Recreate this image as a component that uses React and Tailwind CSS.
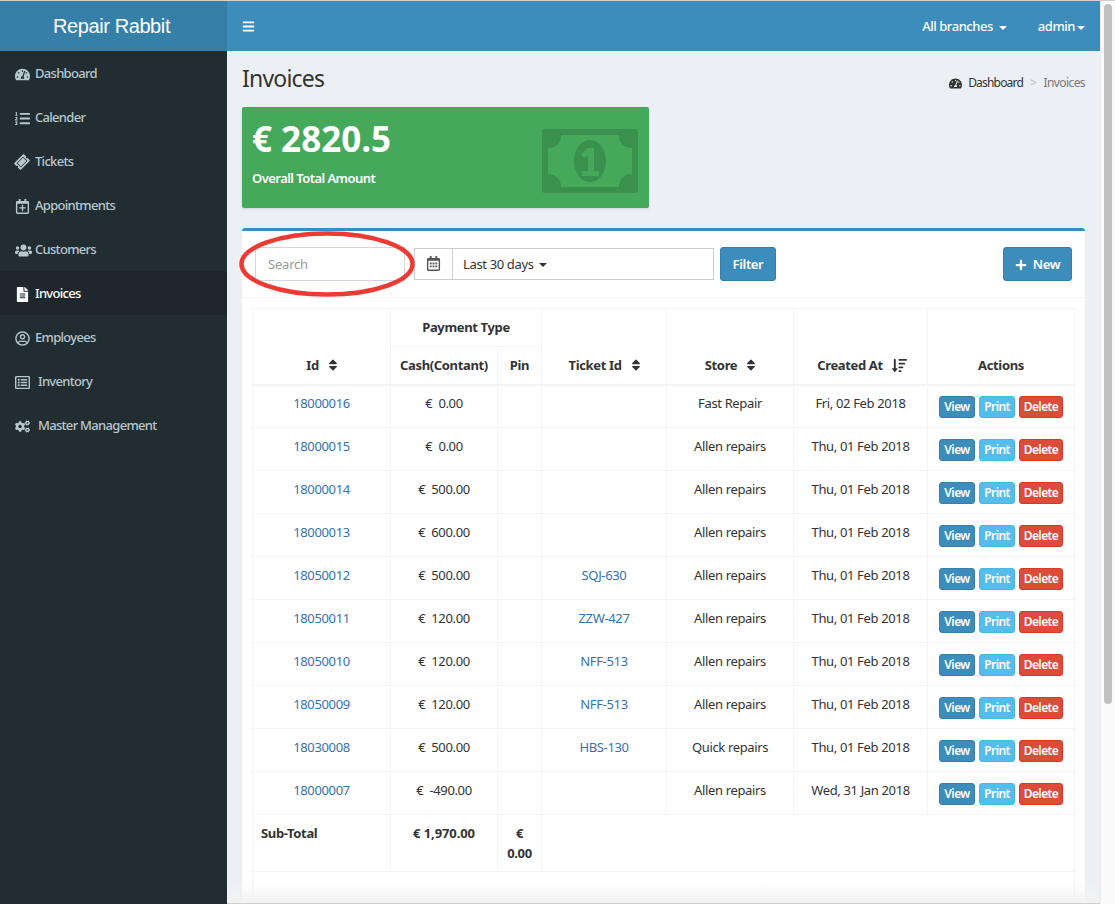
import {
  FaTachometerAlt,
  FaListOl,
  FaTicketAlt,
  FaRegCalendarPlus,
  FaUsers,
  FaFileAlt,
  FaRegUserCircle,
  FaRegListAlt,
  FaCogs,
  FaBars,
  FaRegCalendarAlt,
  FaSort,
  FaSortAmountDown,
  FaPlus,
} from "react-icons/fa"

const navItems = [
  { label: "Dashboard", icon: FaTachometerAlt, size: "text-[15px]" },
  { label: "Calender", icon: FaListOl, size: "text-[15px]" },
  { label: "Tickets", icon: FaTicketAlt, size: "text-[14px] -rotate-45" },
  { label: "Appointments", icon: FaRegCalendarPlus, size: "text-[15px]" },
  { label: "Customers", icon: FaUsers, size: "text-[17px]" },
  { label: "Invoices", icon: FaFileAlt, size: "text-[15px]", active: true },
  { label: "Employees", icon: FaRegUserCircle, size: "text-[15px]" },
  { label: "Inventory", icon: FaRegListAlt, size: "text-[15px]", wide: true },
  { label: "Master Management", icon: FaCogs, size: "text-[15px]", wide: true },
]

const invoices = [
  ["18000016", "0.00", "", "Fast Repair", "Fri, 02 Feb 2018"],
  ["18000015", "0.00", "", "Allen repairs", "Thu, 01 Feb 2018"],
  ["18000014", "500.00", "", "Allen repairs", "Thu, 01 Feb 2018"],
  ["18000013", "600.00", "", "Allen repairs", "Thu, 01 Feb 2018"],
  ["18050012", "500.00", "SQJ-630", "Allen repairs", "Thu, 01 Feb 2018"],
  ["18050011", "120.00", "ZZW-427", "Allen repairs", "Thu, 01 Feb 2018"],
  ["18050010", "120.00", "NFF-513", "Allen repairs", "Thu, 01 Feb 2018"],
  ["18050009", "120.00", "NFF-513", "Allen repairs", "Thu, 01 Feb 2018"],
  ["18030008", "500.00", "HBS-130", "Quick repairs", "Thu, 01 Feb 2018"],
  ["18000007", "-490.00", "", "Allen repairs", "Wed, 31 Jan 2018"],
]

const Caret = ({ className = "ml-[5px]" }) => (
  <span className={`inline-block align-middle border-x-[4px] border-x-transparent border-t-[4px] border-t-current ${className}`} />
)

const MoneyIcon = () => (
  <svg className="absolute left-[300px] top-[22px] w-[96px] h-[64px] text-[#3a914e]" viewBox="0 0 96 64" fill="currentColor">
    <path
      fillRule="evenodd"
      d="M3 0h90a3 3 0 0 1 3 3v58a3 3 0 0 1-3 3H3a3 3 0 0 1-3-3V3a3 3 0 0 1 3-3zM19 6c0 8-5 13-13 13v26c8 0 13 5 13 13h58c0-8 5-13 13-13V19c-8 0-13-5-13-13zM48 11c9 0 16 9.500 16 21s-7 21-16 21-16-9.500-16-21 7-21 16-21z"
    />
    <path d="M46 19h6v23h5v5H40v-5h6V26l-4 3-3-4z" fill="#45a85a" />
  </svg>
)

const SortHead = ({ children, rowSpan, icon, className = "pl-[11px] pr-2" }) => (
  <th rowSpan={rowSpan} className={`border border-[#f4f4f4] border-b-2 align-bottom pb-[8px] text-center font-bold ${className}`}>
    {children}
    {icon || <FaSort className="inline-block ml-[7px] text-[14px] -mt-[2px]" />}
  </th>
)

const ActionButton = ({ className, children }) => (
  <button className={`h-[22px] rounded-[3px] border text-[12px] font-semibold text-white tracking-[-0.6px] ${className}`}>{children}</button>
)

const App = () => {
  return (
    <div className="relative w-[1115px] h-[904px] overflow-hidden flex flex-col font-['Noto_Sans',sans-serif] text-[13px] tracking-[-0.35px] text-[#333] bg-white">
      <div className="h-px bg-[#d0d0d0] shrink-0" />
      <div className="flex flex-1 min-h-0">
        <div className="w-[1100px] flex flex-col">
          {/* Top bar */}
          <div className="flex h-[50px] shrink-0 bg-[#3c8dbc] text-white">
            <div className="w-[227px] bg-[#367fa9] flex items-center justify-center pr-[4px] font-['Liberation_Sans',sans-serif] text-[20px] tracking-[-0.4px]">
              Repair Rabbit
            </div>
            <div className="flex-1 flex items-center pl-[15px] pr-[15px]">
              <FaBars className="text-[13px]" />
              <div className="ml-auto flex items-center gap-[31px] pt-[2px] font-medium tracking-[-0.45px]">
                <span>
                  All branches <Caret className="ml-[3px]" />
                </span>
                <span>
                  admin
                  <Caret className="ml-[2px]" />
                </span>
              </div>
            </div>
          </div>

          <div className="flex flex-1 min-h-0">
            {/* Sidebar */}
            <div className="w-[227px] shrink-0 bg-[#222d32] text-[#b8c7ce] font-medium tracking-[-0.7px]">
              {navItems.map((item) => (
                <div
                  key={item.label}
                  className={`h-[44px] flex items-center pl-[15px] pt-[2px] ${item.active ? "bg-[#1e282c] text-white" : ""}`}
                >
                  <span className={`flex items-center shrink-0 ${item.wide ? "w-[23px]" : "w-[20px]"}`}>
                    <item.icon className={item.size} />
                  </span>
                  {item.label}
                </div>
              ))}
            </div>

            {/* Content */}
            <div className="flex-1 min-w-0 bg-[#ecf0f5] px-[15px]">
              <div className="flex items-center justify-between h-[56px]">
                <h1 className="text-[23px] font-normal tracking-[-0.8px] pb-[2px]">Invoices</h1>
                <div className="flex items-center text-[12px] pt-[8px]">
                  <FaTachometerAlt className="text-[13px] mr-[6px]" />
                  <span className="tracking-[-0.8px]">Dashboard</span>
                  <span className="mx-[7px] text-[#bbb]">&gt;</span>
                  <span className="text-[#777] tracking-[-0.6px]">Invoices</span>
                </div>
              </div>

              <div className="relative w-[407px] h-[101px] rounded-[2px] bg-[#45a85a] text-white px-[10px] pt-[10px] shadow-sm">
                <div className="text-[35px] font-bold leading-[44px] tracking-normal">€ 2820.5</div>
                <div className="mt-[7px] font-semibold leading-[20px] tracking-[-0.55px]">Overall Total Amount</div>
                <MoneyIcon />
              </div>

              {/* Box */}
              <div className="mt-[20px] border-t-[3px] border-t-[#3c8dbc] rounded-t-[3px] bg-white">
                <div className="flex items-center h-[67px] px-[13px] pb-[1px] border-b border-[#f4f4f4]">
                  <input
                    className="w-[150px] h-[34px] border border-[#d2d6de] px-3 outline-none placeholder:text-[#999] tracking-[-0.2px]"
                    placeholder="Search"
                  />
                  <div className="flex ml-[9px] h-[32px] w-[300px] border border-[#ccc]">
                    <span className="w-[38px] border-r border-[#ccc] flex items-center justify-center">
                      <FaRegCalendarAlt className="text-[15px] text-[#555]" />
                    </span>
                    <span className="flex-1 flex items-center pl-[10px] pt-[2px]">
                      Last 30 days
                      <Caret />
                    </span>
                  </div>
                  <button className="ml-[6px] w-[56px] h-[34px] pt-[2px] rounded-[3px] bg-[#3c8dbc] border border-[#367fa9] text-white font-semibold">
                    Filter
                  </button>
                  <button className="ml-auto w-[69px] h-[34px] pt-[2px] rounded-[3px] bg-[#3c8dbc] border border-[#367fa9] text-white font-semibold flex items-center justify-center gap-[6px]">
                    <FaPlus className="text-[12px]" />
                    New
                  </button>
                </div>

                <div className="px-[10px] pt-[10px]">
                  <table className="w-[822px] table-fixed border-collapse">
                    <colgroup>
                      <col className="w-[138px]" />
                      <col className="w-[107px]" />
                      <col className="w-[44px]" />
                      <col className="w-[125px]" />
                      <col className="w-[127px]" />
                      <col className="w-[134px]" />
                      <col className="w-[147px]" />
                    </colgroup>
                    <thead>
                      <tr className="h-[38px]">
                        <SortHead rowSpan={2}>Id</SortHead>
                        <th colSpan={2} className="border border-[#f4f4f4] font-bold text-center">
                          Payment Type
                        </th>
                        <SortHead rowSpan={2}>Ticket Id</SortHead>
                        <SortHead rowSpan={2}>Store</SortHead>
                        <SortHead rowSpan={2} icon={<FaSortAmountDown className="inline-block ml-[9px] text-[15px] -mt-[2px]" />}>
                          Created At
                        </SortHead>
                        <SortHead rowSpan={2} className="px-2" icon={<span />}>
                          Actions
                        </SortHead>
                      </tr>
                      <tr className="h-[38px]">
                        <th className="border border-[#f4f4f4] border-b-2 font-bold text-center">Cash(Contant)</th>
                        <th className="border border-[#f4f4f4] border-b-2 font-bold text-center">Pin</th>
                      </tr>
                    </thead>
                    <tbody className="leading-[20px]">
                      {invoices.map((row, i) => {
                        // the thick header border pushes the first row's text down a pixel
                        const pad = i === 0 ? "pt-[7px]" : "pt-[8px]"
                        return (
                          <tr key={row[0]} className="h-[43px]">
                            <td className={`border border-[#f4f4f4] text-center align-top text-[#3572b0] ${pad}`}>{row[0]}</td>
                            <td className={`border border-[#f4f4f4] text-center align-top ${pad}`}>€ &nbsp;{row[1]}</td>
                            <td className="border border-[#f4f4f4]" />
                            <td className={`border border-[#f4f4f4] text-center align-top text-[#3572b0] ${pad}`}>{row[2]}</td>
                            <td className={`border border-[#f4f4f4] text-center align-top ${pad}`}>{row[3]}</td>
                            <td className={`border border-[#f4f4f4] text-center align-top ${pad}`}>{row[4]}</td>
                            <td className={`border border-[#f4f4f4] align-top ${i === 0 ? "pt-[10px]" : "pt-[11px]"}`}>
                              <div className="flex justify-center gap-[4px]">
                                <ActionButton className="w-[36px] bg-[#3c8dbc] border-[#367fa9]">View</ActionButton>
                                <ActionButton className="w-[36px] bg-[#55bdec] border-[#46b8da]">Print</ActionButton>
                                <ActionButton className="w-[44px] bg-[#dd4b39] border-[#d73925]">Delete</ActionButton>
                              </div>
                            </td>
                          </tr>
                        )
                      })}
                      <tr className="h-[57px] font-bold">
                        <td className="border border-[#f4f4f4] align-top pt-[8px] pl-[8px]">Sub-Total</td>
                        <td className="border border-[#f4f4f4] align-top pt-[8px] text-center tracking-[-0.1px]">€ 1,970.00</td>
                        <td className="border border-[#f4f4f4] align-top pt-[8px] text-center">
                          €<br />0.00
                        </td>
                        <td colSpan={4} className="border border-[#f4f4f4]" />
                      </tr>
                      <tr className="h-[40px]">
                        <td colSpan={7} className="border border-[#f4f4f4]" />
                      </tr>
                    </tbody>
                  </table>
                </div>
              </div>
            </div>
          </div>
        </div>

        {/* Scrollbar */}
        <div className="w-[15px] bg-[#fafafa] border-l border-[#ececec] pt-[3px] pl-[3px]">
          <div className="w-[8px] h-[700px] rounded-full bg-[#c1c1c1]" />
        </div>
      </div>

      {/* Search highlight drawn over the screenshot */}
      <svg className="absolute left-[237px] top-[230px] pointer-events-none" width="180" height="68" viewBox="0 0 180 68" fill="none">
        <ellipse cx="90" cy="34" rx="85.500" ry="30.500" stroke="#ee3a33" strokeWidth="4.500" />
      </svg>

      {/* Window shadow along the bottom edge */}
      <div className="absolute left-[227px] right-[15px] bottom-0 h-[22px] bg-gradient-to-b from-transparent to-[#f2f2f2] border-b border-b-[#cfcfcf] pointer-events-none" />
    </div>
  )
}

export default App
